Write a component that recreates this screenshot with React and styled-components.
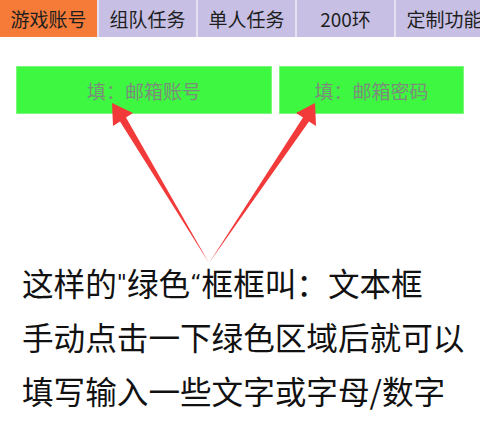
import React from 'react'
import styled, { createGlobalStyle } from 'styled-components'

const tabs = ['游戏账号', '组队任务', '单人任务', '200环', '定制功能']
const fields = [
    { label: '填：邮箱账号', width: 256 },
    { label: '填：邮箱密码', width: 185 },
]

const App = () => {
    return (
        <Page>
            <Global />
            <TabBar>
                {tabs.map((t, i) => (
                    <Tab key={t} active={i === 0}>{t}</Tab>
                ))}
            </TabBar>
            <Fields>
                {fields.map(f => (
                    <Field key={f.label} w={f.width}>{f.label}</Field>
                ))}
            </Fields>
            <Notes>
                <Line>这样的<Quote>"</Quote>绿色<Quote>“</Quote>框框叫：文本框</Line>
                <Line>手动点击一下绿色区域后就可以</Line>
                <Line>填写输入一些文字或字母/数字</Line>
            </Notes>
            <Arrows viewBox='0 0 480 422' width='480' height='422'>
                <polygon points='209,263 120,121.4 113,126 112,103 133,113 126,117.6' />
                <polygon points='209,263 303,117.6 296,113 315,103 316,126 309,121.4' />
            </Arrows>
        </Page>
    )
}

const Global = createGlobalStyle`
body{
    margin: 0;
    background: #fff;
    font-family: "Noto Sans CJK SC", "Noto Sans", sans-serif;
}
`
const Page = styled.div`
position: relative;
width: 480px;
height: 422px;
overflow: hidden;
`
const TabBar = styled.div`
display: flex;
gap: 2px;
height: 37px;
background: #e4e0f2;
`
const Tab = styled.div`
flex: 0 0 97px;
display: flex;
align-items: center;
justify-content: center;
white-space: nowrap;
font-size: 19px;
color: #1e1e1e;
background: ${p => p.active ? '#f67b38' : '#c7c0e4'};
`
const Fields = styled.div`
display: flex;
gap: 7px;
padding-left: 16px;
margin-top: 29px;
`
const Field = styled.div`
box-sizing: border-box;
width: ${p => p.w}px;
height: 48px;
display: flex;
align-items: center;
justify-content: center;
background: #3ef740;
border: 1px solid #7cf97c;
font-size: 19px;
color: #7c8c7c;
`
const Notes = styled.div`
margin-top: 141px;
padding-left: 22px;
`
const Line = styled.div`
font-size: 31.6px;
line-height: 54px;
height: 54px;
color: #111;
white-space: nowrap;
`
const Quote = styled.span`
font-family: "DejaVu Sans", sans-serif;
font-size: 22px;
vertical-align: 6px;
`
const Arrows = styled.svg`
position: absolute;
left: 0;
top: 0;
pointer-events: none;
polygon{
    fill: #f23a3a;
}
`

export default App
